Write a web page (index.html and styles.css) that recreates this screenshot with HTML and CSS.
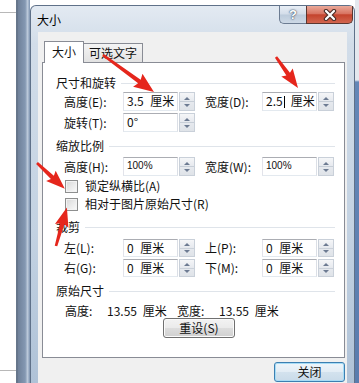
FILE: index.html
```html
<!DOCTYPE html>
<html lang="zh-CN">
<head>
    <meta charset="UTF-8">
    <title>大小</title>
    <link rel="stylesheet" href="styles.css">
</head>
<body>
    <div class="screen">
        <div class="doc">
            <div class="rule"></div>
            <div class="rule"></div>
        </div>
        <div class="backwin"></div>

        <div class="dialog">
            <div class="titlebar">
                <span class="title">大小</span>
                <div class="capbtn help">?</div>
                <div class="capbtn close">
                    <svg width="16" height="12" viewBox="0 0 16 12">
                        <path d="M4 2 L12 10 M12 2 L4 10" stroke="#4a2d28" stroke-width="4.4" stroke-linecap="round"/>
                        <path d="M4 2 L12 10 M12 2 L4 10" stroke="#fff" stroke-width="2.2" stroke-linecap="round"/>
                    </svg>
                </div>
            </div>

            <div class="client">
                <div class="tabs">
                    <div class="tab on">大小</div>
                    <div class="tab">可选文字</div>
                </div>

                <div class="panel">
                    <div class="group-head">尺寸和旋转</div>
                    <div class="row">
                        <span class="lbl">高度(E):</span>
                        <div class="field"><div class="box">3.5 厘米</div><div class="spin"></div></div>
                        <span class="lbl r">宽度(D):</span>
                        <div class="field"><div class="box">2.5<span class="caret"></span>厘米</div><div class="spin"></div></div>
                    </div>
                    <div class="row">
                        <span class="lbl">旋转(T):</span>
                        <div class="field"><div class="box">0°</div><div class="spin"></div></div>
                    </div>

                    <div class="group-head g2">缩放比例</div>
                    <div class="row first">
                        <span class="lbl">高度(H):</span>
                        <div class="field"><div class="box small">100%</div><div class="spin"></div></div>
                        <span class="lbl r">宽度(W):</span>
                        <div class="field"><div class="box small">100%</div><div class="spin"></div></div>
                    </div>
                    <div class="check-row"><span class="check"></span>锁定纵横比(A)</div>
                    <div class="check-row"><span class="check"></span>相对于图片原始尺寸(R)</div>

                    <div class="group-head g3">裁剪</div>
                    <div class="row crop first">
                        <span class="lbl">左(L):</span>
                        <div class="field"><div class="box">0 厘米</div><div class="spin"></div></div>
                        <span class="lbl r">上(P):</span>
                        <div class="field"><div class="box">0 厘米</div><div class="spin"></div></div>
                    </div>
                    <div class="row crop">
                        <span class="lbl">右(G):</span>
                        <div class="field"><div class="box">0 厘米</div><div class="spin"></div></div>
                        <span class="lbl r">下(M):</span>
                        <div class="field"><div class="box">0 厘米</div><div class="spin"></div></div>
                    </div>

                    <div class="group-head g4">原始尺寸</div>
                    <div class="info">
                        <span class="info-lbl">高度:</span>
                        <span class="info-val">13.55 厘米</span>
                        <span class="info-lbl">宽度:</span>
                        <span class="info-val">13.55 厘米</span>
                    </div>
                    <div class="btn reset">重设(S)</div>
                </div>

                <div class="footer">
                    <div class="btn default">关闭</div>
                </div>
            </div>
        </div>

        <div class="side"></div>
    </div>

    <!-- red marker arrows drawn over the dialog -->
    <svg class="marks" width="359" height="383">
        <g transform="translate(103 55) rotate(36)">
            <polygon points="0,-1.3 45,-2.2 43,-8 63,0 43,8 45,2.2 0,1.3"/>
        </g>
        <g transform="translate(276 57) rotate(54.6)">
            <polygon points="0,-1.3 21,-2.2 19,-7 38,0 19,7 21,2.2 0,1.3"/>
        </g>
        <g transform="translate(37 163) rotate(42.9)">
            <polygon points="0,-1.3 21,-2.2 19,-7 38,0 19,7 21,2.2 0,1.3"/>
        </g>
        <g transform="translate(56 246) rotate(-74.2)">
            <polygon points="0,-1.3 23,-2.2 21,-7 40,0 21,7 23,2.2 0,1.3"/>
        </g>
    </svg>
</body>
</html>
```

FILE: styles.css
```css
* {
    margin: 0;
    padding: 0;
    box-sizing: border-box;
}

body {
    width: 359px;
    height: 383px;
    overflow: hidden;
    position: relative;
    background: #fff;
    color: #111;
    font: 12px/16px "Noto Sans CJK SC", "Noto Sans", sans-serif;
}

.screen {
    display: flex;
    height: 383px;
}

/* page behind the dialog */
.doc {
    width: 16px;
    padding: 12px 0;
    display: flex;
    flex-direction: column;
    justify-content: space-between;
    background: #fff;
}
.doc .rule {
    height: 1px;
    background: #b8b8b8;
}

.backwin {
    width: 14px;
    border-left: 2px solid #66768b;
    background: linear-gradient(90deg, #6f819a 0%, #8498b2 60%, #bccadb 80%, #7b91ae 100%);
}
.side {
    width: 4px;
    background: linear-gradient(#e4e8ee 0, #e4e8ee 80px, #6487b7 82px, #5a7cad 100%);
}

/* dialog window */
.dialog {
    width: 325px;
    margin-top: 5px;
    display: flex;
    flex-direction: column;
    border: 1px solid #5f7189;
    border-bottom: none;
    border-radius: 6px 6px 0 0;
    background: linear-gradient(#e3eaf2 0%, #d2dde9 10%, #c3d2e2 60%, #afc2d7 100%);
}

.titlebar {
    height: 26px;
    display: flex;
    padding-left: 6px;
}
.title {
    padding-top: 6px;
    color: #000;
}

.capbtn {
    height: 18px;
    display: flex;
    align-items: center;
    justify-content: center;
}
.capbtn.help {
    width: 27px;
    margin-left: auto;
    border: 1px solid #6c7c92;
    border-top: none;
    border-right: none;
    border-radius: 0 0 0 5px;
    background: linear-gradient(#e8eef5 0%, #d3dde9 48%, #bccbdb 52%, #cdd9e6 100%);
    color: #fff;
    font: bold 13px/16px "Liberation Sans", sans-serif;
    text-shadow: 0 0 2px #34465e, 0 0 1px #34465e;
}
.capbtn.close {
    width: 47px;
    margin-right: 1px;
    border: 1px solid #5a3730;
    border-top: none;
    border-radius: 0 0 5px 0;
    background: linear-gradient(#eaa999 0%, #d87462 45%, #c4432d 52%, #d2664f 100%);
}

/* client area */
.client {
    flex: 1;
    margin: 0 7px;
    padding: 9px 2px 0 4px;
    background: #f0f0f0;
}

.tabs {
    height: 21px;
    margin-left: 2px;
    display: flex;
    align-items: flex-end;
}
.tab {
    height: 19px;
    width: 60px;
    margin-left: -1px;
    border: 1px solid #898c95;
    border-bottom: none;
    background: linear-gradient(#f4f4f4, #e2e2e2);
    text-align: center;
    line-height: 18px;
}
.tab.on {
    position: relative;
    z-index: 1;
    width: 40px;
    height: 22px;
    margin: 0 0 -1px 0;
    background: #fff;
    line-height: 20px;
}

.panel {
    height: 296px;
    padding-top: 12px;
    border: 1px solid #898c95;
    background: #fff;
}

.group-head {
    height: 16px;
    margin: 0 9px 0 13px;
    display: flex;
    align-items: center;
    gap: 5px;
}
.group-head::after {
    content: "";
    flex: 1;
    height: 1px;
    background: #dfe4ea;
}
.group-head.g2 { margin-top: 5px; }
.group-head.g3 { margin-top: 6px; }
.group-head.g4 { margin-top: 5px; }

.row {
    height: 21px;
    padding-left: 21px;
    display: flex;
    align-items: center;
}
.row.first { margin-top: 2px; }
.row.crop { height: 20px; }
.row.crop.first { margin-top: 3px; }

.lbl {
    width: 59px;
}
.lbl.r {
    width: 57px;
    margin-left: 10px;
}

.field {
    width: 72px;
    height: 19px;
    display: flex;
    gap: 1px;
}
.crop .field {
    height: 18px;
}
.box {
    flex: 1;
    padding-left: 3px;
    border: 1px solid #abadb3;
    border-color: #abadb3 #dbdfe6 #e3e9ef #e2e3ea;
    background: #fff;
    line-height: 16px;
    white-space: nowrap;
    word-spacing: 4px;
}
.box.small {
    font: 10px/16px "Liberation Sans", sans-serif;
}
.caret {
    display: inline-block;
    width: 1px;
    height: 12px;
    margin: 0 6px 0 1px;
    vertical-align: -2px;
    background: #000;
}

.spin {
    width: 16px;
    display: flex;
    flex-direction: column;
    align-items: center;
    justify-content: center;
    gap: 4px;
    border: 1px solid #c9d0d9;
    background: linear-gradient(#f5f6f8 0%, #e6e9ee 48%, #c7ced7 49%, #c7ced7 53%, #e6e9ee 54%, #dfe3e8 100%);
}
.spin::before,
.spin::after {
    content: "";
    width: 0;
    height: 0;
    border-left: 3px solid transparent;
    border-right: 3px solid transparent;
}
.spin::before {
    border-bottom: 3px solid #6d7b92;
}
.spin::after {
    border-top: 3px solid #6d7b92;
}

.check-row {
    height: 18px;
    padding-left: 22px;
    display: flex;
    align-items: center;
}
.check {
    width: 13px;
    height: 13px;
    margin-right: 7px;
    border: 1px solid #8e8f8f;
    background: linear-gradient(135deg, #d8d8d8, #fbfbfb);
    box-shadow: inset 0 0 0 1px #f3f3f3;
}

.info {
    height: 15px;
    margin-top: 4px;
    padding-left: 22px;
    display: flex;
    align-items: center;
    line-height: 15px;
}
.info-lbl {
    width: 42px;
}
.info-val {
    width: 70px;
    word-spacing: 3px;
}

.btn {
    height: 20px;
    border: 1px solid #707070;
    border-radius: 3px;
    background: linear-gradient(#f3f3f3 0%, #ebebeb 48%, #dddddd 52%, #d0d0d0 100%);
    box-shadow: inset 0 0 0 1px #fbfbfb;
    text-align: center;
    line-height: 18px;
}
.btn.reset {
    width: 72px;
    margin-left: 120px;
}

.footer {
    margin-top: 4px;
    display: flex;
    justify-content: flex-end;
}
.btn.default {
    width: 71px;
    border-color: #3c7fb1;
    box-shadow: inset 0 0 0 1px #a6dcf6;
    background: linear-gradient(#eef5fa 0%, #e3edf5 48%, #d3e2ee 52%, #c9dbe9 100%);
}

.marks {
    position: absolute;
    left: 0;
    top: 0;
    pointer-events: none;
}
.marks polygon {
    fill: #e5261c;
}
```
